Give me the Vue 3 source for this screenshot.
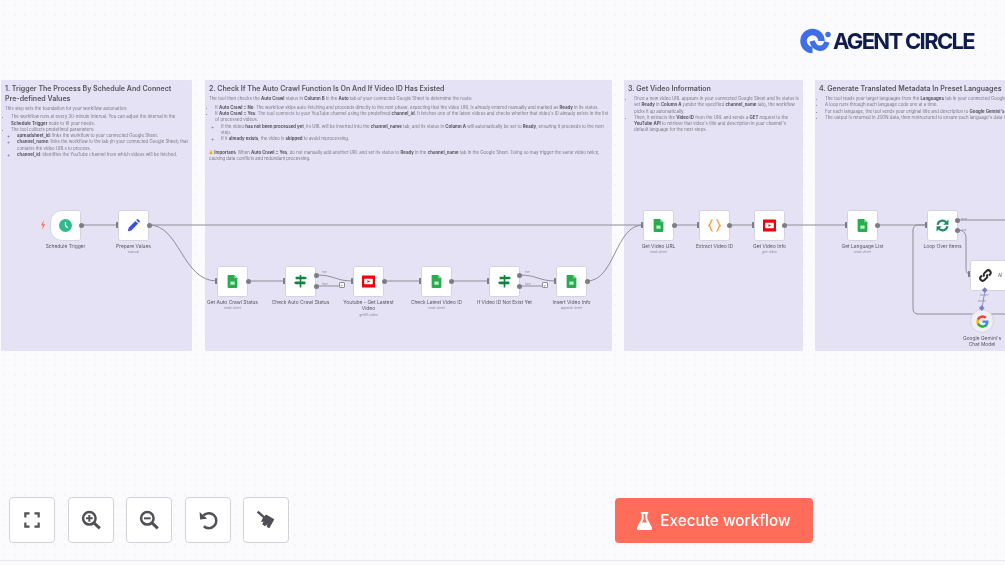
<template>
  <div class="canvas">
    <div class="note" style="left:1px;width:191px">
      <h2>1. Trigger The Process By Schedule And Connect<br>Pre-defined Values</h2>
      <p>This step sets the foundation for your workflow automation:</p>
      <ul>
        <li>The workflow runs at every 30-minute interval. You can adjust the interval in the <b>Schedule Trigger</b> node to fit your needs.</li>
        <li>The tool collects predefined parameters:
          <ul>
            <li><b>spreadsheet_id</b>: links the workflow to your connected Google Sheet.</li>
            <li><b>channel_name</b>: links the workflow to the tab (in your connected Google Sheet) that contains the video URLs to process.</li>
            <li><b>channel_id</b>: identifies the YouTube channel from which videos will be fetched.</li>
          </ul>
        </li>
      </ul>
    </div>
    <div class="note" style="left:205px;width:407px">
      <h2>2. Check If The Auto Crawl Function Is On And If Video ID Has Existed</h2>
      <p>The tool then checks the <b>Auto Crawl</b> status in <b>Column B</b> in the <b>Auto</b> tab of your connected Google Sheet to determine the route:</p>
      <ul>
        <li>If <b>Auto Crawl = No</b>: The workflow skips auto-fetching and proceeds directly to the next phase, expecting that the video URL is already entered manually and marked as <b>Ready</b> in its status.</li>
        <li>If <b>Auto Crawl = Yes</b>: The tool connects to your YouTube channel using the predefined <b>channel_id</b>. It fetches one of the latest videos and checks whether that video's ID already exists in the list of processed videos.
          <ul>
            <li>If the video <b>has not been processed yet</b>, its URL will be inserted into the <b>channel_name</b> tab, and its status in <b>Column A</b> will automatically be set to <b>Ready</b>, ensuring it proceeds to the next step.</li>
            <li>If it <b>already exists</b>, the video is <b>skipped</b> to avoid reprocessing.</li>
          </ul>
        </li>
      </ul>
      <p class="warn"><span class="tri"></span> <b>Important:</b> When <b>Auto Crawl = Yes</b>, do not manually add another URL and set its status to <b>Ready</b> in the <b>channel_name</b> tab in the Google Sheet. Doing so may trigger the same video twice, causing data conflicts and redundant processing.</p>
    </div>
    <div class="note" style="left:624px;width:179px">
      <h2>3. Get Video Information</h2>
      <ul>
        <li>Once a new video URL appears in your connected Google Sheet and its status is set <b>Ready</b> in <b>Column A</b> (under the specified <b>channel_name</b> tab), the workflow picks it up automatically.</li>
        <li>Then, it extracts the <b>Video ID</b> from the URL and sends a <b>GET</b> request to the <b>YouTube API</b> to retrieve that video's title and description in your channel's default language for the next steps.</li>
      </ul>
    </div>
    <div class="note" style="left:815px;width:420px">
      <h2>4. Generate Translated Metadata In Preset Languages</h2>
      <ul>
        <li>The tool reads your target languages from the <b>Languages</b> tab in your connected Google Sheet.</li>
        <li>A loop runs through each language code one at a time.</li>
        <li>For each language, the tool sends your original title and description to <b>Google Gemini's</b> chat model.</li>
        <li>The output is returned in JSON data, then restructured to ensure each language's data is stored.</li>
      </ul>
    </div>

    <svg class="edges" width="1005" height="565" viewBox="0 0 1005 565" fill="none">
      <path v-for="(d, i) in edges" :key="i" :d="d" />
      <path class="ai-line" d="M985 290L982 308" />
      <path class="bolt" d="M44 220l-3 5.500h2l-1 4.500 3.200-5.800h-2z" />
    </svg>

    <div v-for="n in nodes" :key="n.label" class="node" :class="n.cls" :style="{ left: n.x + 'px', top: n.y + 'px' }">
      <svg class="ico" viewBox="0 0 24 24">
        <template v-if="n.icon === 'clock'">
          <circle cx="12" cy="12" r="12" fill="#2dbb8c" />
          <path d="M12 5.500V12.500L16 16" fill="none" stroke="#fff" stroke-width="2.400" />
        </template>
        <path v-else-if="n.icon === 'pen'" fill="#3b50e3" d="M15.500 3.500l5 5L8 21l-6.500 1.500L3 16zM17 2l1.500-1.500a1.500 1.500 0 0 1 2 0l3 3a1.500 1.500 0 0 1 0 2L22 7z" />
        <template v-else-if="n.icon === 'sheet'">
          <path fill="#28ad4e" d="M4 0h11l6 6v16a2 2 0 0 1-2 2H5a2 2 0 0 1-2-2V1a1 1 0 0 1 1-1z" />
          <path fill="#7bd596" d="M15 0l6 6h-6z" />
          <rect x="8" y="12" width="8" height="6" fill="#b8ecc8" />
        </template>
        <path v-else-if="n.icon === 'if'" fill="#10843f" d="M3 3h18l3 2.500-3 2.500H3zM0 14.500L3 12h18v5H3zM10.500 0h3v3h-3zM10.500 8h3v4h-3zM10.500 17h3v6h-3z" />
        <template v-else-if="n.icon === 'yt'">
          <rect y="1" width="24" height="22" rx="1" fill="#f5000a" />
          <rect x="4" y="7" width="16" height="10" rx="1.500" fill="#fff" />
          <path d="M10 9.500l5 2.500-5 2.500z" fill="#f5000a" />
        </template>
        <path v-else-if="n.icon === 'code'" fill="none" stroke="#f5a03c" stroke-width="2.600" d="M8.500 1.500C4 1.500 6 10.500 1.500 12 6 13.500 4 22.500 8.500 22.500M15.500 1.500c4.500 0 2.500 9 7 10.500-4.500 1.500-2.500 10.500-7 10.500" />
        <g v-else-if="n.icon === 'loop'" fill="none" stroke="#1d8a6d" stroke-width="3.800">
          <path d="M3 11A9 9 0 0 1 19 6.500" />
          <path d="M21 13A9 9 0 0 1 5 17.500" />
          <path fill="#1d8a6d" stroke="none" d="M23 1V10.500h-9.500zM1 23V13.500H10.500z" />
        </g>
        <g v-else-if="n.icon === 'link'" fill="none" stroke="#2b2b2b" stroke-width="3.800">
          <path d="M10 14a4.500 4.500 0 0 1 0-6.400l4-4a4.500 4.500 0 0 1 6.400 6.400l-2 2" />
          <path d="M14 10a4.500 4.500 0 0 1 0 6.400l-4 4A4.500 4.500 0 0 1 3.600 14l2-2" />
        </g>
        <g v-else-if="n.icon === 'google'">
          <path fill="#4285f4" d="M23 12.300c0-.8-.1-1.600-.2-2.300H12v4.400h6.200a5.300 5.300 0 0 1-2.300 3.500v2.800h3.700c2.200-2 3.400-5 3.400-8.400z" />
          <path fill="#34a853" d="M12 23.500c3.100 0 5.700-1 7.600-2.800l-3.700-2.800c-1 .7-2.300 1.100-3.900 1.100-3 0-5.500-2-6.400-4.700H1.800v2.900a11.500 11.500 0 0 0 10.200 6.300z" />
          <path fill="#fbbc05" d="M5.600 14.300a6.900 6.900 0 0 1 0-4.600V6.800H1.800a11.500 11.500 0 0 0 0 10.400z" />
          <path fill="#ea4335" d="M12 5c1.700 0 3.200.6 4.400 1.700l3.300-3.300A11.500 11.500 0 0 0 1.800 6.800l3.800 2.900C6.500 7 9 5 12 5z" />
        </g>
      </svg>
      <span v-if="n.tail" class="tail">{{ n.tail }}</span>
      <div class="caption">
        <span class="name" v-html="n.label"></span>
        <span v-if="n.sub" class="sub">{{ n.sub }}</span>
      </div>
    </div>

    <i v-for="(p, i) in outs" :key="'o' + i" class="out" :style="{ left: p[0] + 'px', top: p[1] + 'px' }"></i>
    <i v-for="(p, i) in ins" :key="'i' + i" class="in" :style="{ left: p[0] + 'px', top: p[1] + 'px' }"></i>
    <i v-for="(p, i) in pluses" :key="'p' + i" class="plus" :style="{ left: p[0] + 'px', top: p[1] + 'px' }">+</i>
    <i v-for="(p, i) in diamonds" :key="'d' + i" class="diamond" :style="{ left: p[0] + 'px', top: p[1] + 'px' }"></i>
    <span v-for="t in tags" :key="t.text + t.x" class="tag" :style="{ left: t.x + 'px', top: t.y + 'px' }">{{ t.text }}</span>

    <div class="logo">
      <svg width="31" height="27" viewBox="0 0 31 27" fill="none">
        <path d="M21.500 13a9 9 0 1 0-9 9" stroke="#3e6fe8" stroke-width="6.500" />
        <path d="M12 13c3 9 12 10 15 1" stroke="#3e6fe8" stroke-width="5.500" />
        <circle cx="28" cy="6.500" r="2.700" fill="#3e6fe8" />
      </svg>
      <span>AGENT CIRCLE</span>
    </div>

    <div class="tools">
      <button v-for="t in tools" :key="t.name" :aria-label="t.name">
        <svg width="20" height="20" viewBox="0 0 24 24" v-html="t.svg"></svg>
      </button>
    </div>

    <button class="run">
      <svg width="15" height="18" viewBox="0 0 16 19" fill="#fff">
        <path d="M4 0h8v1.500h-1V7l5 9.500a1.700 1.700 0 0 1-1.500 2.500h-13A1.700 1.700 0 0 1 0 16.500L5 7V1.500H4zM7 2v5.500L5.400 11h5.200L9 7.500V2z" />
      </svg>
      Execute workflow
    </button>
  </div>
</template>

<script setup>
const nodes = [
  { x: 50, y: 210, icon: 'clock', label: 'Schedule Trigger', cls: 'trigger' },
  { x: 118, y: 210, icon: 'pen', label: 'Prepare Values', sub: 'manual' },
  { x: 217, y: 266, icon: 'sheet', label: 'Get Auto Crawl Status', sub: 'read: sheet' },
  { x: 285, y: 266, icon: 'if', label: 'Check Auto Crawl Status' },
  { x: 353, y: 266, icon: 'yt', label: 'Youtube - Get Lastest<br>Video', sub: 'getAll: video' },
  { x: 421, y: 266, icon: 'sheet', label: 'Check Latest Video ID', sub: 'read: sheet' },
  { x: 489, y: 266, icon: 'if', label: 'If Video ID Not Exist Yet' },
  { x: 556, y: 266, icon: 'sheet', label: 'Insert Video Info', sub: 'append: sheet' },
  { x: 643, y: 210, icon: 'sheet', label: 'Get Video URL', sub: 'read: sheet' },
  { x: 699, y: 210, icon: 'code', label: 'Extract Video ID' },
  { x: 754, y: 210, icon: 'yt', label: 'Get Video Info', sub: 'get: video' },
  { x: 847, y: 210, icon: 'sheet', label: 'Get Language List', sub: 'read: sheet' },
  { x: 927, y: 210, icon: 'loop', label: 'Loop Over Items' },
  { x: 970, y: 260, icon: 'link', label: '', tail: 'AI', cls: 'wide' },
  { x: 970, y: 309, icon: 'google', label: "Google Gemini's<br>Chat Model", cls: 'round' }
]

const edges = [
  'M81 225H118',
  'M149 225H643',
  'M149 225C180 225 182 281 217 281',
  'M248 281H285',
  'M316 275C335 275 335 281 353 281',
  'M316 286H339',
  'M384 281H421',
  'M451 281H489',
  'M519 275C538 275 538 281 556 281',
  'M519 286H542',
  'M587 281C615 281 615 225 643 225',
  'M674 225H699',
  'M729 225H754',
  'M784 225H847',
  'M877 225H927',
  'M957 220H1005',
  'M957 230C965 230 966 234 966 240V268C966 272 967 274 970 274',
  'M1005 314H918C915 314 913 312 913 309V230C913 227 915 225 918 225H927'
]

const outs = [[81, 225], [149, 225], [248, 281], [316, 275], [316, 286], [384, 281], [451, 281], [519, 275], [519, 286], [587, 281], [674, 225], [729, 225], [784, 225], [877, 225], [957, 220], [957, 230]]
const ins = [[118, 225], [217, 281], [285, 281], [353, 281], [421, 281], [489, 281], [556, 281], [643, 225], [699, 225], [754, 225], [847, 225], [927, 225], [970, 274]]
const pluses = [[339, 282], [542, 282]]
const diamonds = [[985, 290], [982, 308]]
const tags = [
  { text: 'true', x: 322, y: 271 },
  { text: 'false', x: 322, y: 283 },
  { text: 'true', x: 525, y: 271 },
  { text: 'false', x: 525, y: 283 },
  { text: 'done', x: 961, y: 218 },
  { text: 'loop', x: 961, y: 229 },
  { text: 'Model*', x: 980, y: 293.5 },
  { text: 'Model', x: 978, y: 299.5 }
]

const tools = [
  { name: 'fit', svg: '<path fill="none" stroke="#4f4f55" stroke-width="2.600" d="M4 9V4h5M15 4h5v5M20 15v5h-5M9 20H4v-5"/>' },
  { name: 'zoom in', svg: '<circle cx="10" cy="10" r="7.500" fill="none" stroke="#4f4f55" stroke-width="3"/><path d="M15.500 15.500l7 6.500" stroke="#4f4f55" stroke-width="3.500"/><path d="M10 6v8M6 10h8" stroke="#4f4f55" stroke-width="2.400"/>' },
  { name: 'zoom out', svg: '<circle cx="10" cy="10" r="7.500" fill="none" stroke="#4f4f55" stroke-width="3"/><path d="M15.500 15.500l7 6.500" stroke="#4f4f55" stroke-width="3.500"/><path d="M6 10h8" stroke="#4f4f55" stroke-width="2.400"/>' },
  { name: 'undo', svg: '<path d="M6.500 6.500A9 9 0 1 1 7 19.500" fill="none" stroke="#4f4f55" stroke-width="3"/><path d="M2 2.500l.5 9 8.500-1z" fill="#4f4f55"/>' },
  { name: 'clear', svg: '<path d="M1 3l2-2 8 7-2 2z" fill="#4f4f55"/><path d="M8 10l4-4.500 10 5.500-6 11-3-1.500.5-3-3 2-3-2.500 1.500-3-3 .5z" fill="#4f4f55"/>' }
]
</script>

<style scoped>
.canvas {
  position: relative;
  width: 1005px;
  height: 561px;
  overflow: hidden;
  font-family: Inter, "Liberation Sans", sans-serif;
  background-color: #fbfbfe;
  background-image: radial-gradient(#eceef4 0.6px, transparent 0.8px);
  background-size: 10px 10px;
  border-bottom: 1px solid #e8eaf0;
  box-sizing: border-box;
  filter: blur(0.45px);
}

.note {
  position: absolute;
  top: 80px;
  height: 271px;
  box-sizing: border-box;
  padding: 4px 2px 4px 4px;
  background: #e6e2f6;
  border-radius: 1px;
  color: #76767e;
  font-size: 4.35px;
  line-height: 6.3px;
}

.note h2 {
  margin: 0 0 2.500px;
  font-size: 7.050px;
  line-height: 9.500px;
  font-weight: 600;
  color: #55555c;
}

.note p {
  margin: 0 0 2.500px;
}

.note b {
  font-weight: 700;
  color: #55555c;
}

.note ul {
  margin: 0;
  padding-left: 6px;
}

.note .warn {
  margin-top: 7px;
}

.tri {
  display: inline-block;
  width: 0;
  height: 0;
  border-left: 2.500px solid transparent;
  border-right: 2.500px solid transparent;
  border-bottom: 4.500px solid #e5b622;
}

.edges {
  position: absolute;
  left: 0;
  top: 0;
}

.edges path {
  stroke: #8e8e94;
  stroke-width: 1;
}

.edges .ai-line {
  stroke: #8f93c9;
}

.edges .bolt {
  stroke: none;
  fill: #ff6d5a;
}

.node {
  position: absolute;
  width: 31px;
  height: 31px;
  box-sizing: border-box;
  display: flex;
  align-items: center;
  justify-content: center;
  background: #fff;
  border: 1px solid #d3d3dd;
  border-radius: 2.500px;
}

.node.trigger {
  border-top-left-radius: 12px;
  border-bottom-left-radius: 12px;
}

.node.wide {
  width: 60px;
  justify-content: flex-start;
  padding-left: 8px;
  gap: 6px;
}

.node.round {
  width: 24px;
  height: 24px;
  border-radius: 50%;
  background: #f0eff6;
}

.ico {
  width: 13px;
  height: 13px;
  flex: none;
}

.tail {
  font-size: 4.500px;
  color: #555;
}

.caption {
  position: absolute;
  left: 50%;
  top: 100%;
  transform: translateX(-50%);
  width: 90px;
  margin-top: 3px;
  display: flex;
  flex-direction: column;
  align-items: center;
  text-align: center;
}

.name {
  font-size: 4.900px;
  line-height: 6.300px;
  color: #56565e;
}

.sub {
  font-size: 3.200px;
  line-height: 6px;
  color: #8a8a92;
}

.out,
.in,
.plus,
.diamond {
  position: absolute;
  display: block;
}

.out {
  width: 5px;
  height: 5px;
  margin: -2.500px;
  border-radius: 50%;
  background: #7d7d83;
}

.in {
  width: 2.500px;
  height: 6px;
  margin: -3px 0 0 -2.500px;
  background: #7d7d83;
  border-radius: 0.500px;
}

.plus {
  width: 6px;
  height: 6px;
  box-sizing: border-box;
  border: 0.600px solid #8e8e94;
  border-radius: 1px;
  background: #fff;
  color: #77777d;
  font-size: 5px;
  font-style: normal;
  line-height: 5px;
  text-align: center;
}

.diamond {
  width: 3.500px;
  height: 3.500px;
  margin: -1.750px;
  background: #7a7fc4;
  transform: rotate(45deg);
}

.tag {
  position: absolute;
  font-size: 2.600px;
  line-height: 3px;
  color: #8a8a92;
}

.logo {
  position: absolute;
  left: 800px;
  top: 27px;
  display: flex;
  align-items: center;
  gap: 2px;
}

.logo span {
  font-size: 22px;
  font-weight: 700;
  letter-spacing: -1.670px;
  line-height: 28px;
  color: #101c4e;
  white-space: nowrap;
}

.tools {
  position: absolute;
  left: 9px;
  top: 497px;
  display: flex;
  gap: 12.500px;
}

.tools button {
  width: 46px;
  height: 46px;
  padding: 0;
  display: flex;
  align-items: center;
  justify-content: center;
  background: #fff;
  border: 1px solid #d0d3da;
  border-radius: 4px;
}

.run {
  position: absolute;
  left: 615px;
  top: 498px;
  width: 198px;
  height: 45px;
  display: flex;
  align-items: center;
  justify-content: center;
  gap: 8px;
  background: #ff6d5a;
  border: 0;
  border-radius: 4px;
  color: #fff;
  font-family: inherit;
  font-size: 15.300px;
  font-weight: 500;
}
</style>

<style>
html,
body {
  background: #fbfbfe;
}
</style>
